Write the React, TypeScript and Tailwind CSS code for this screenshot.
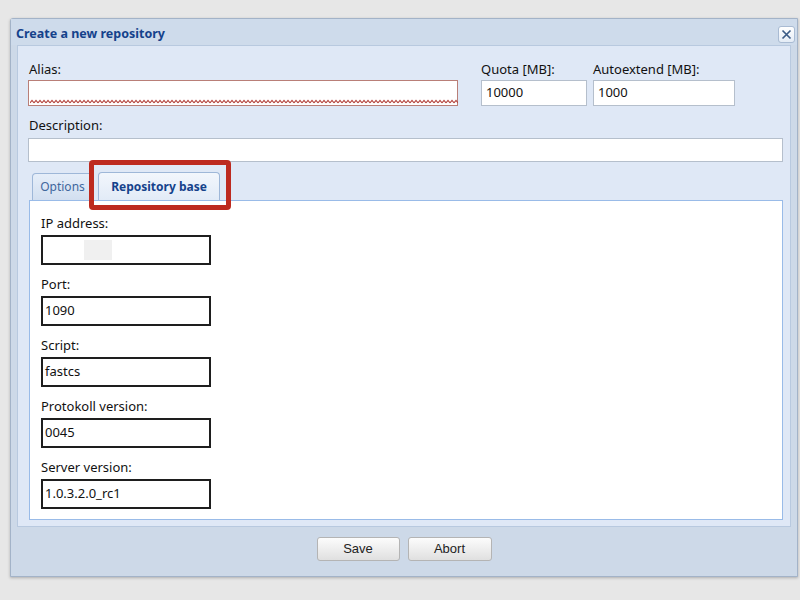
import React from "react";

const font = { fontFamily: '"Noto Sans", "DejaVu Sans", sans-serif' };

function Wavy() {
  return (
    <svg className="absolute left-[1px] right-[1px] bottom-[1px] h-[5px]" width="100%" height="5" preserveAspectRatio="none">
      <defs>
        <pattern id="wv" width="4" height="5" patternUnits="userSpaceOnUse">
          <path d="M0 4 L2 1.5 L4 4" fill="none" stroke="#b5463f" strokeWidth="1.1" />
        </pattern>
      </defs>
      <rect width="100%" height="5" fill="url(#wv)" />
    </svg>
  );
}

function PanelField({ label, value, blank }: { label: string; value?: string; blank?: boolean }) {
  return (
    <div className="flex flex-col">
      <div className="text-[13px] leading-[16px] text-[#111] h-[20px]">{label}</div>
      <div className="w-[170px] h-[30px] border-2 border-[#1e1e1e] bg-white flex items-center px-[2px] text-[13px] text-[#111]">
        {blank ? <div className="ml-[39px] w-[28px] h-[20px] bg-[#f0f0f0]" /> : value}
      </div>
    </div>
  );
}

export default function App() {
  return (
    <div className="w-[800px] h-[600px] bg-[#e7e7e7] pt-[18px] pl-[10px] overflow-hidden" style={font}>
      <div className="w-[788px] h-[559px] border border-[#a3b3c8] bg-[#cdd9e8] flex flex-col rounded-tl-[3px] shadow-[0_1px_3px_rgba(0,0,0,0.25)]">
        {/* header */}
        <div className="h-[26px] flex items-center justify-between pl-[5px] pr-[2px] pt-[4px] bg-[#cedbeb]">
          <div className="text-[12.5px] font-bold text-[#15428b]">Create a new repository</div>
          <div className="w-[17px] h-[17px] border border-[#a9bbd3] rounded-[3px] bg-gradient-to-b from-white to-[#e4ecf6] flex items-center justify-center">
            <svg width="11" height="11" viewBox="0 0 11 11">
              <path d="M1.5 1.5 L9.5 9.5 M9.5 1.5 L1.5 9.5" stroke="#3b5b86" strokeWidth="1.7" />
            </svg>
          </div>
        </div>
        {/* body */}
        <div className="mx-[6px] h-[482px] bg-[#dfe8f6] border border-[#b8c9df] pl-[10px] pr-[10px] pt-[15px] flex flex-col">
          <div className="flex">
            <div className="flex flex-col w-[430px]">
              <div className="text-[13px] leading-[16px] text-[#111] h-[19px] pl-[1px]">Alias:</div>
              <div className="relative h-[26px] border border-[#b97f78] bg-white">
                <Wavy />
              </div>
            </div>
            <div className="flex flex-col w-[106px] ml-[23px]">
              <div className="text-[13px] leading-[16px] text-[#111] h-[19px]">Quota [MB]:</div>
              <div className="h-[26px] border border-[#b5bfcc] bg-white flex items-center px-[4px] text-[13px] text-[#111]">10000</div>
            </div>
            <div className="flex flex-col w-[142px] ml-[6px]">
              <div className="text-[13px] leading-[16px] text-[#111] h-[19px]">Autoextend [MB]:</div>
              <div className="h-[26px] border border-[#b5bfcc] bg-white flex items-center px-[4px] text-[13px] text-[#111]">1000</div>
            </div>
          </div>
          <div className="mt-[11px] text-[13px] leading-[16px] text-[#111] h-[21px] pl-[1px]">Description:</div>
          <div className="h-[24px] w-[755px] border border-[#b5bfcc] bg-white" />
          {/* tabs */}
          <div className="relative mt-[10px] ml-[1px] w-[754px] flex flex-col">
            <div className="flex items-end h-[28px] pl-[3px] gap-[5px]">
              <div className="h-[27px] w-[61px] border border-b-0 border-[#9eb7d8] rounded-t-[4px] bg-gradient-to-b from-[#e6eef9] to-[#d2dff0] flex items-center justify-center text-[12px] text-[#3f679d]">
                Options
              </div>
              <div className="h-[28px] w-[122px] border border-b-0 border-[#9eb7d8] rounded-t-[4px] bg-gradient-to-b from-[#f2f6fc] to-[#e2ebf7] flex items-center justify-center text-[12px] font-bold text-[#15428b]">
                Repository base
              </div>
            </div>
            <div className="h-[320px] border border-[#99bbe8] bg-white pl-[11px] pt-[14px] flex flex-col gap-[11px]">
              <PanelField label="IP address:" blank />
              <PanelField label="Port:" value="1090" />
              <PanelField label="Script:" value="fastcs" />
              <PanelField label="Protokoll version:" value="0045" />
              <PanelField label="Server version:" value="1.0.3.2.0_rc1" />
            </div>
            <div className="absolute left-[60px] top-[-12px] w-[142px] h-[50px] border-[5px] border-[#bd2a1f] rounded-[4px]" />
          </div>
        </div>
        {/* footer */}
        <div className="flex-1 flex items-center justify-center gap-[8px] pb-[5px]" style={{ fontFamily: '"Liberation Sans", Arial, sans-serif' }}>
          <button className="w-[83px] h-[24px] border border-[#b4b4b4] rounded-[3px] bg-gradient-to-b from-[#fcfcfc] to-[#e0e0e0] text-[13px] text-[#222]">Save</button>
          <button className="w-[84px] h-[24px] border border-[#b4b4b4] rounded-[3px] bg-gradient-to-b from-[#fcfcfc] to-[#e0e0e0] text-[13px] text-[#222]">Abort</button>
        </div>
      </div>
    </div>
  );
}
